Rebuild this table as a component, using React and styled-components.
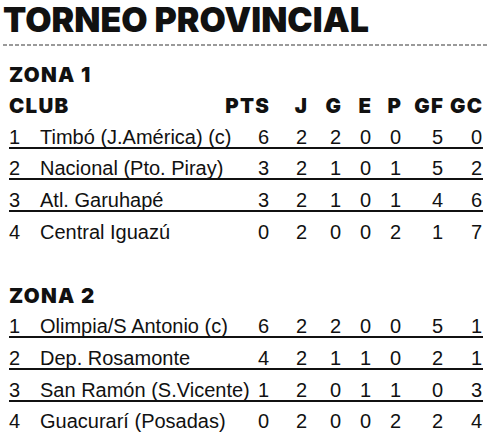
import React from 'react';
import styled, { createGlobalStyle } from 'styled-components';

const Global = createGlobalStyle`
  html, body { margin: 0; padding: 0; background: #fff; }
  body { width: 500px; height: 446px; overflow: hidden; }
`;

const Page = styled.div`
  width: 500px;
  height: 446px;
  box-sizing: border-box;
  color: #111;
`;

const Title = styled.h1`
  margin: 0;
  padding-left: 3px;
  font-family: Inter, "Liberation Sans", sans-serif;
  font-weight: 900;
  font-size: 34px;
  line-height: 40px;
  letter-spacing: 0;
  white-space: nowrap;
`;

const Dashed = styled.div`
  margin: 4px 13px 0 3px;
  height: 2px;
  background: repeating-linear-gradient(to right, #9a9a9a 0 4px, transparent 4px 6px);
`;

const Zone = styled.section`
  margin: ${p => p.$first ? '8px' : '31.6px'} 17px 0 9px;
`;

const COLS = '31px minmax(0, 1fr) 45px 38px 34px 30px 30px 42px 39px 1px';

const Row = styled.div`
  display: grid;
  grid-template-columns: ${COLS};
  align-items: end;
  height: 31.6px;
  box-sizing: border-box;
  border-bottom: 2px solid ${p => p.$line ? '#111' : 'transparent'};
  font-family: ${p => p.$head ? 'Inter, "Liberation Sans", sans-serif' : '"Liberation Sans", Arial, sans-serif'};
  font-weight: ${p => p.$head ? 900 : 400};
  font-size: ${p => p.$head ? '20.5px' : '20px'};
  letter-spacing: ${p => p.$head ? '1.3px' : '0'};
  line-height: 19px;
  white-space: nowrap;
`;

const Cell = styled.span`
  text-align: ${p => p.$right ? 'right' : 'left'};
  grid-column: ${p => p.$span || 'auto'};
  margin-right: ${p => p.$right && p.$tight ? '-1.3px' : '0'};
`;

const ZoneTitle = styled(Cell)`
  grid-column: 1 / -1;
`;

const zones = [
  {
    name: 'ZONA 1',
    header: true,
    rows: [
      ['1', 'Timbó (J.América) (c)', 6, 2, 2, 0, 0, 5, 0],
      ['2', 'Nacional (Pto. Piray)', 3, 2, 1, 0, 1, 5, 2],
      ['3', 'Atl. Garuhapé', 3, 2, 1, 0, 1, 4, 6],
      ['4', 'Central Iguazú', 0, 2, 0, 0, 2, 1, 7],
    ],
  },
  {
    name: 'ZONA 2',
    header: false,
    rows: [
      ['1', 'Olimpia/S Antonio (c)', 6, 2, 2, 0, 0, 5, 1],
      ['2', 'Dep. Rosamonte', 4, 2, 1, 1, 0, 2, 1],
      ['3', 'San Ramón (S.Vicente)', 1, 2, 0, 1, 1, 0, 3],
      ['4', 'Guacurarí (Posadas)', 0, 2, 0, 0, 2, 2, 4],
    ],
  },
];

const heads = ['PTS', 'J', 'G', 'E', 'P', 'GF', 'GC'];

export default function App() {
  return (
    <Page>
      <Global />
      <Title>TORNEO PROVINCIAL</Title>
      <Dashed />
      {zones.map((z, zi) => (
        <Zone key={z.name} $first={zi === 0}>
          <Row $head>
            <ZoneTitle>{z.name}</ZoneTitle>
          </Row>
          {z.header && (
            <Row $head>
              <Cell $span="1 / 3">CLUB</Cell>
              {heads.map(h => <Cell key={h} $right $tight>{h}</Cell>)}
            </Row>
          )}
          {z.rows.map((r, i) => (
            <Row key={r[0]} $line={i < z.rows.length - 1}>
              {r.map((v, k) => <Cell key={k} $right={k > 1}>{v}</Cell>)}
            </Row>
          ))}
        </Zone>
      ))}
    </Page>
  );
}
